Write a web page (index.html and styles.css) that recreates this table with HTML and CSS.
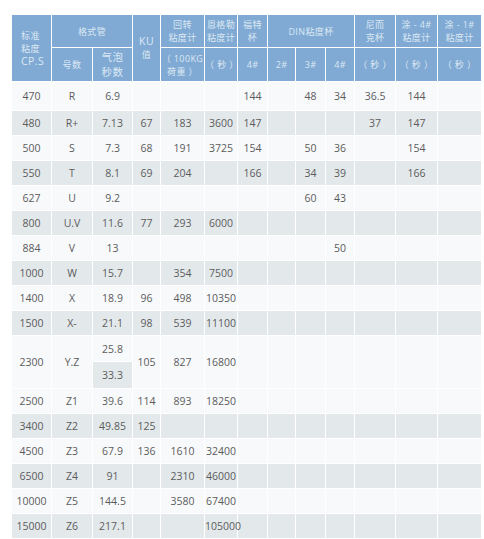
FILE: index.html
```html
<!DOCTYPE html>
<html lang="zh">
<head>
<meta charset="utf-8">
<title>粘度对照表</title>
<link rel="stylesheet" href="styles.css">
</head>
<body>
<table class="visc">
  <colgroup>
    <col class="w40"><col class="w41"><col class="w40"><col class="w28"><col class="w44"><col class="w33"><col class="w30"><col class="w28"><col class="w30"><col class="w29"><col class="w41"><col class="w42"><col class="w44">
  </colgroup>
  <thead>
    <tr class="h1">
      <th rowspan="2" class="first">标准<br>粘度<br><span class="lat">CP.S</span></th>
      <th colspan="2">格式管</th>
      <th rowspan="2"><span class="lat">KU</span><br>值</th>
      <th>回转<br>粘度计</th>
      <th>恩格勒<br>粘度计</th>
      <th>福特<br>杯</th>
      <th colspan="3">DIN粘度杯</th>
      <th>尼而<br>克杯</th>
      <th>涂 - 4#<br>粘度计</th>
      <th>涂 - 1#<br>粘度计</th>
    </tr>
    <tr class="h2">
      <th>号数</th>
      <th class="big">气泡<br>秒数</th>
      <th>（ 100KG<br>荷重 ）</th>
      <th>（ 秒 ）</th>
      <th>4#</th>
      <th>2#</th>
      <th>3#</th>
      <th>4#</th>
      <th>（ 秒 ）</th>
      <th>（ 秒 ）</th>
      <th>（ 秒 ）</th>
    </tr>
  </thead>
  <tbody>
    <tr class="top"><td>470</td><td>R</td><td>6.9</td><td></td><td></td><td></td><td>144</td><td></td><td>48</td><td>34</td><td>36.5</td><td>144</td><td></td></tr>
    <tr><td>480</td><td>R+</td><td>7.13</td><td>67</td><td>183</td><td>3600</td><td>147</td><td></td><td></td><td></td><td>37</td><td>147</td><td></td></tr>
    <tr><td>500</td><td>S</td><td>7.3</td><td>68</td><td>191</td><td>3725</td><td>154</td><td></td><td>50</td><td>36</td><td></td><td>154</td><td></td></tr>
    <tr><td>550</td><td>T</td><td>8.1</td><td>69</td><td>204</td><td></td><td>166</td><td></td><td>34</td><td>39</td><td></td><td>166</td><td></td></tr>
    <tr><td>627</td><td>U</td><td>9.2</td><td></td><td></td><td></td><td></td><td></td><td>60</td><td>43</td><td></td><td></td><td></td></tr>
    <tr><td>800</td><td>U.V</td><td>11.6</td><td>77</td><td>293</td><td>6000</td><td></td><td></td><td></td><td></td><td></td><td></td><td></td></tr>
    <tr><td>884</td><td>V</td><td>13</td><td></td><td></td><td></td><td></td><td></td><td></td><td>50</td><td></td><td></td><td></td></tr>
    <tr><td>1000</td><td>W</td><td>15.7</td><td></td><td>354</td><td>7500</td><td></td><td></td><td></td><td></td><td></td><td></td><td></td></tr>
    <tr><td>1400</td><td>X</td><td>18.9</td><td>96</td><td>498</td><td>10350</td><td></td><td></td><td></td><td></td><td></td><td></td><td></td></tr>
    <tr><td>1500</td><td>X-</td><td>21.1</td><td>98</td><td>539</td><td>11100</td><td></td><td></td><td></td><td></td><td></td><td></td><td></td></tr>
    <tr class="split"><td rowspan="2">2300</td><td rowspan="2">Y.Z</td><td>25.8</td><td rowspan="2">105</td><td rowspan="2">827</td><td rowspan="2">16800</td><td rowspan="2"></td><td rowspan="2"></td><td rowspan="2"></td><td rowspan="2"></td><td rowspan="2"></td><td rowspan="2"></td><td rowspan="2"></td></tr>
    <tr class="split2"><td>33.3</td></tr>
    <tr><td>2500</td><td>Z1</td><td>39.6</td><td>114</td><td>893</td><td>18250</td><td></td><td></td><td></td><td></td><td></td><td></td><td></td></tr>
    <tr><td>3400</td><td>Z2</td><td>49.85</td><td>125</td><td></td><td></td><td></td><td></td><td></td><td></td><td></td><td></td><td></td></tr>
    <tr><td>4500</td><td>Z3</td><td>67.9</td><td>136</td><td>1610</td><td>32400</td><td></td><td></td><td></td><td></td><td></td><td></td><td></td></tr>
    <tr><td>6500</td><td>Z4</td><td>91</td><td></td><td>2310</td><td>46000</td><td></td><td></td><td></td><td></td><td></td><td></td><td></td></tr>
    <tr><td>10000</td><td>Z5</td><td>144.5</td><td></td><td>3580</td><td>67400</td><td></td><td></td><td></td><td></td><td></td><td></td><td></td></tr>
    <tr><td>15000</td><td>Z6</td><td>217.1</td><td></td><td></td><td>105000</td><td></td><td></td><td></td><td></td><td></td><td></td><td></td></tr>
  </tbody>
</table>
</body>
</html>
```

FILE: styles.css
```css
html, body {
  margin: 0;
  padding: 0;
  background: #ffffff;
}

body {
  padding: 14px 0 0 11px;
  font-family: "Open Sans", "Noto Sans CJK SC", sans-serif;
}

.visc {
  border-collapse: collapse;
  table-layout: fixed;
  width: 470px;
}

.w40 { width: 40px; }
.w41 { width: 41px; }
.w28 { width: 28px; }
.w44 { width: 44px; }
.w33 { width: 33px; }
.w30 { width: 30px; }
.w29 { width: 29px; }
.w42 { width: 42px; }

.visc th,
.visc td {
  border: 1px solid #ffffff;
  padding: 0;
  text-align: center;
  vertical-align: middle;
  white-space: nowrap;
  overflow: visible;
}

.visc th {
  background: #80aad3;
  color: #dce8f4;
  font-weight: normal;
  font-size: 9px;
  line-height: 13px;
  letter-spacing: 0.4px;
}

.visc th .lat {
  font-size: 10.5px;
}

.visc th.first {
  text-align: left;
  padding-left: 9px;
}

.visc th.big {
  font-size: 10.5px;
  line-height: 15px;
}

.h1 { height: 33px; }
.h2 { height: 34px; }

.visc td {
  font-size: 10.5px;
  color: #5c5c5c;
  background: #f8f9fb;
}

.visc tbody tr { height: 25px; }
.visc tbody tr.top { height: 29px; }
.visc tbody tr.split { height: 26px; }
.visc tbody tr.split2 { height: 27px; }

.visc tbody tr:nth-child(even) td {
  background: #e3e8eb;
}
```
